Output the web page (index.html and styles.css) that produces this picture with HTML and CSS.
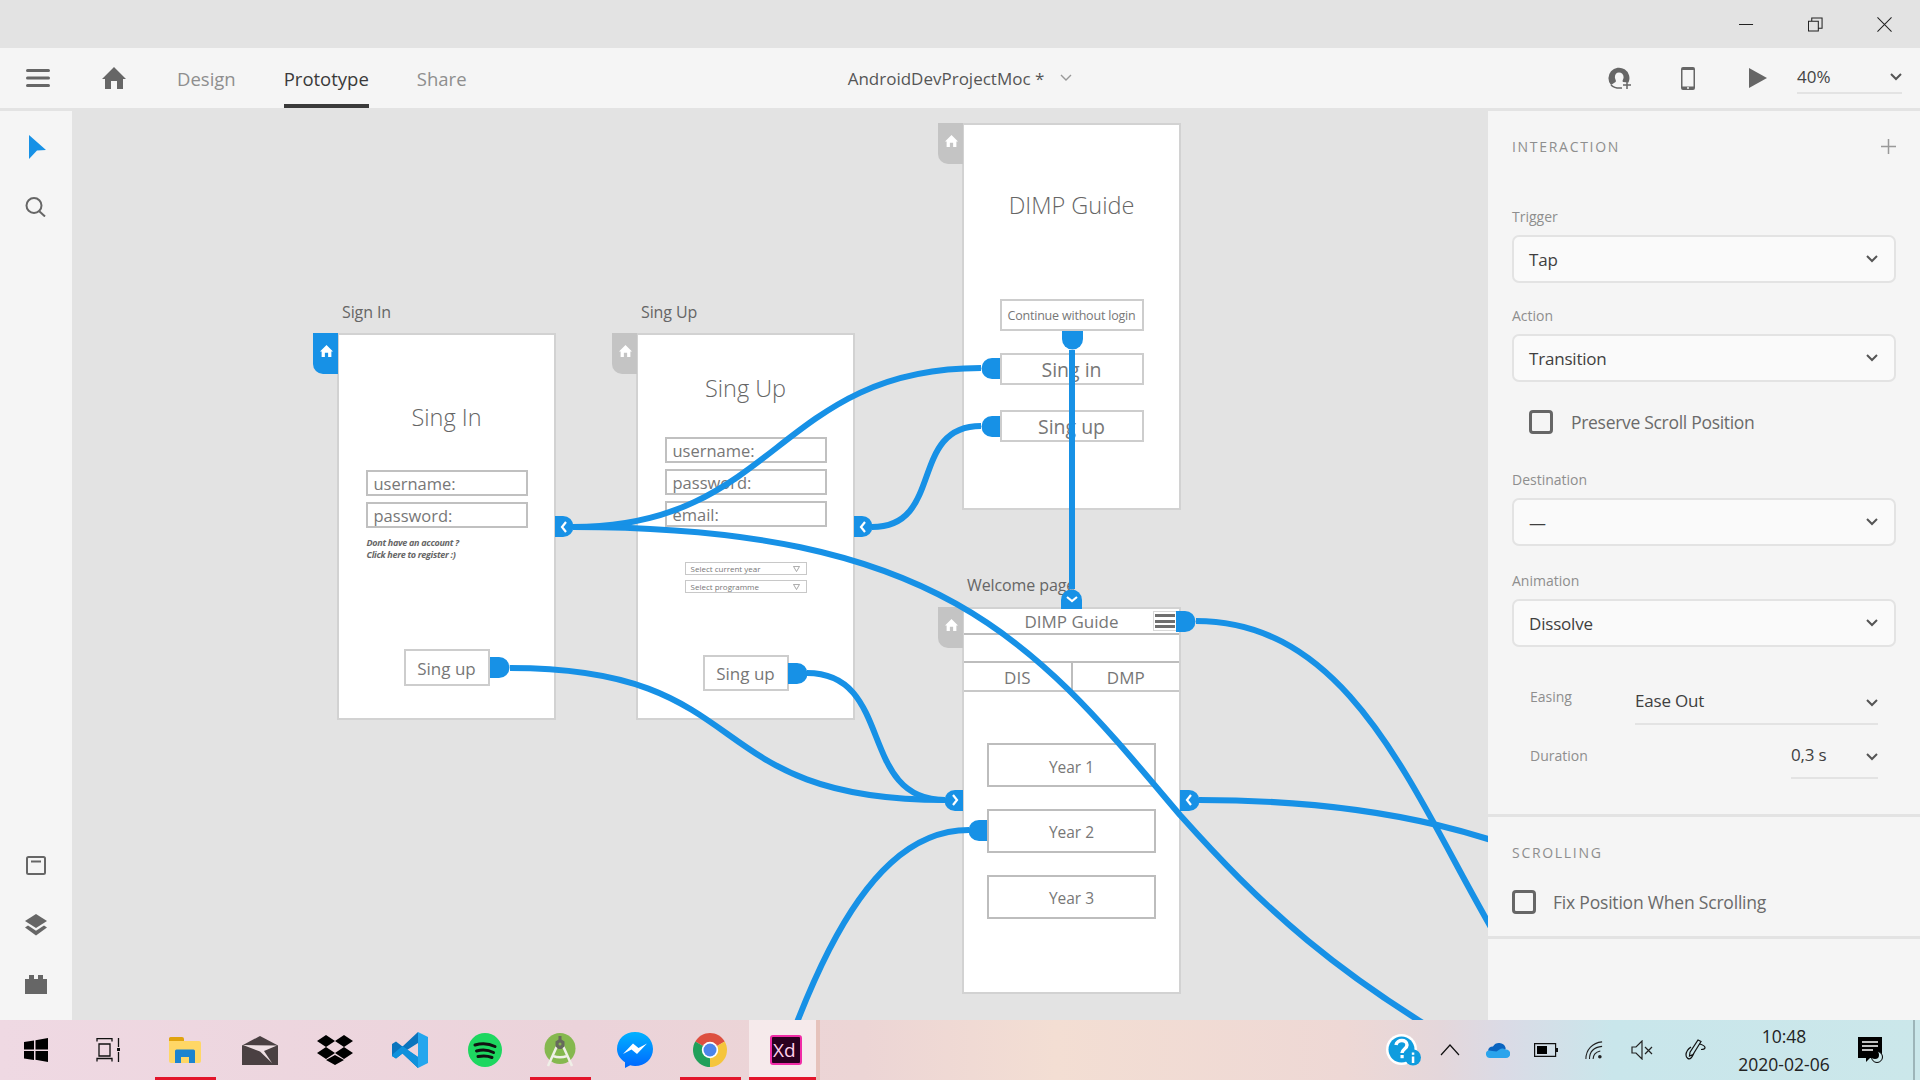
FILE: index.html
```html
<!DOCTYPE html>
<html>
<head>
  <title>AndroidDevProjectMoc - Adobe XD</title>
  <link rel="stylesheet" href="styles.css">
</head>
<body>
  <div class="titlebar">
    <svg class="win-btn" viewBox="0 0 16 16"><path d="M0 8h15"/></svg>
    <svg class="win-btn" viewBox="0 0 16 16"><path d="M.5 4.500h10.500v10.500h-10.500zM4 4.500v-3.500h11v11h-4"/></svg>
    <svg class="win-btn" viewBox="0 0 16 16"><path d="M.5.5l15 15M15.500.5l-15 15"/></svg>
  </div>

  <div class="toolbar">
    <div class="toolbar-left">
      <svg class="menu-icon" viewBox="0 0 24 18"><path d="M1.500 1.500h21M1.500 9h21M1.500 16.500h21"/></svg>
      <svg class="home-icon" viewBox="0 0 24 22"><path d="M12 0l12 12h-3v10h-6v-8h-6v8h-6v-10h-3z"/></svg>
      <a class="tab">Design</a>
      <a class="tab tab-active">Prototype</a>
      <a class="tab">Share</a>
    </div>
    <div class="doc-title">AndroidDevProjectMoc *
      <svg class="chev chev-light" viewBox="0 0 12 8"><path d="M1 1l5 5 5-5"/></svg>
    </div>
    <div class="toolbar-right">
      <svg class="tool-icon user-icon" viewBox="0 0 24 22"><path d="M3 18A10.500 10.500 0 1 1 20.500 15.500L15 15C14 14 15 13 15.500 11C16 8 14 5.500 11 5.500C8 5.500 6.500 8 7 11C7.500 13 8.500 14 7.500 15z"/><path class="thin" d="M3 18C6 21 9 21.500 14 21M19 14v8M15 18h8"/></svg>
      <svg class="tool-icon phone-icon" viewBox="0 0 14 23"><path fill-rule="evenodd" d="M2 0h10a2 2 0 0 1 2 2v19a2 2 0 0 1-2 2h-10a2 2 0 0 1-2-2v-19a2 2 0 0 1 2-2zM1.500 3v16.500h11v-16.500z"/><circle cx="7" cy="21" r="1" fill="#f5f5f5"/></svg>
      <svg class="tool-icon play-icon" viewBox="0 0 18 20"><path d="M0 0l18 10-18 10z"/></svg>
      <div class="zoom-select">40%
        <svg class="chev" viewBox="0 0 12 8"><path d="M1 1l5 5 5-5"/></svg>
      </div>
    </div>
  </div>

  <div class="workspace">
    <div class="rail">
      <div class="rail-group">
        <svg class="rail-icon cursor-icon" viewBox="0 0 17 24"><path d="M0 0l17 15-9 0.500-8 8.500z"/></svg>
        <svg class="rail-icon search-icon" viewBox="0 0 22 20"><circle cx="9" cy="8.500" r="7.500"/><path d="M14 14l6 5.500"/></svg>
      </div>
      <div class="rail-group rail-bottom">
        <svg class="rail-icon outline-icon" viewBox="0 0 20 19"><rect x="1" y="1" width="18" height="17" rx="1.500"/><path d="M5 5.500h10"/></svg>
        <svg class="rail-icon layers-icon" viewBox="0 0 22 22"><path d="M11 0l11 7-11 7-11-7z"/><path d="M3 11.500l8 5.200 8-5.200 3 2-11 8-11-8z"/></svg>
        <svg class="rail-icon plugin-icon" viewBox="0 0 22 19"><path d="M4 0h5v4h4v-4h5v4h4v15h-22v-15h4z"/></svg>
      </div>
    </div>

    <div class="canvas">
      <div class="artboard artboard-signin">
        <span class="artboard-label">Sign In</span>
        <div class="home-tab home-tab-active"><svg viewBox="0 0 24 22"><path d="M12 0l12 12h-3v10h-6v-8h-6v8h-6v-10h-3z"/></svg></div>
        <h2 class="board-title">Sing In</h2>
        <div class="field">username:</div>
        <div class="field">password:</div>
        <p class="hint">Dont have an account ?<br>Click here to register :)</p>
        <div class="btn btn-signup">Sing up</div>
      </div>

      <div class="artboard artboard-signup">
        <span class="artboard-label">Sing Up</span>
        <div class="home-tab"><svg viewBox="0 0 24 22"><path d="M12 0l12 12h-3v10h-6v-8h-6v8h-6v-10h-3z"/></svg></div>
        <h2 class="board-title title-signup">Sing Up</h2>
        <div class="field">username:</div>
        <div class="field">password:</div>
        <div class="field">email:</div>
        <div class="mini-select mini-first">Select current year<svg viewBox="0 0 8 7"><path d="M.5.5h7l-3.500 6z"/></svg></div>
        <div class="mini-select">Select programme<svg viewBox="0 0 8 7"><path d="M.5.5h7l-3.500 6z"/></svg></div>
        <div class="btn btn-signup2">Sing up</div>
      </div>

      <div class="artboard artboard-start">
        <div class="home-tab"><svg viewBox="0 0 24 22"><path d="M12 0l12 12h-3v10h-6v-8h-6v8h-6v-10h-3z"/></svg></div>
        <h2 class="board-title title-start">DIMP Guide</h2>
        <div class="btn btn-wide btn-small">Continue without login</div>
        <div class="btn btn-wide btn-signin">Sing in</div>
        <div class="btn btn-wide btn-last">Sing up</div>
      </div>

      <div class="artboard artboard-welcome">
        <span class="artboard-label">Welcome page</span>
        <div class="home-tab"><svg viewBox="0 0 24 22"><path d="M12 0l12 12h-3v10h-6v-8h-6v8h-6v-10h-3z"/></svg></div>
        <div class="app-header">
          <span></span>
          <span class="app-name">DIMP Guide</span>
          <span class="burger"><i></i><i></i><i></i></span>
        </div>
        <div class="app-tabs"><div>DIS</div><div>DMP</div></div>
        <div class="year">Year 1</div>
        <div class="year">Year 2</div>
        <div class="year">Year 3</div>
      </div>

      <svg class="wires" viewBox="72 108 1416 912">
        <g class="wire">
          <path d="M573 527C777 527 777 368 981 368"/>
          <path d="M573 527C950 527 1040 650 1180 815C1258 902 1335 978 1500 1068"/>
          <path d="M510 668C760 668 695 800 945 800"/>
          <path d="M807 673C895 673 857 800 945 800"/>
          <path d="M872 527C945 527 908 426 981 426"/>
          <path d="M1072 350V589"/>
          <path d="M969 830C733 830 733 1600 495 1600"/>
          <path d="M1196 621C1455 621 1455 1103 1714 1103"/>
          <path d="M1199 800C1600 800 1600 960 2000 960"/>
        </g>
        <g class="node">
          <path d="M490 657h9a10.500 10.500 0 0 1 0 21h-9z"/>
          <path d="M788 663h9a10.500 10.500 0 0 1 0 21h-9z"/>
          <path d="M1000 358h-8a10.500 10.500 0 0 0 0 21h8z"/>
          <path d="M1000 416h-8a10.500 10.500 0 0 0 0 21h8z"/>
          <path d="M1062 331v8a10.500 10.500 0 0 0 21 0v-8z"/>
          <path d="M1176 611h9a10.500 10.500 0 0 1 0 21h-9z"/>
          <path d="M987 820h-8a10.500 10.500 0 0 0 0 21h8z"/>
          <path d="M555 516h8a10.500 10.500 0 0 1 0 21h-8z"/>
          <path d="M854 516h8a10.500 10.500 0 0 1 0 21h-8z"/>
          <path d="M963 790h-8a10.500 10.500 0 0 0 0 21h8z"/>
          <path d="M1180 790h9a10.500 10.500 0 0 1 0 21h-9z"/>
          <path d="M1061 609v-9a10.500 10.500 0 0 1 21 0v9z"/>
        </g>
        <g class="node-arrow">
          <path d="M566 522l-4 5 4 5"/>
          <path d="M865 522l-4 5 4 5"/>
          <path d="M953 795l4 5-4 5"/>
          <path d="M1191 795l-4 5 4 5"/>
          <path d="M1067 597l5 4 5-4"/>
        </g>
      </svg>
    </div>

    <div class="panel">
      <section class="panel-section section-interaction">
        <div class="section-head">
          <span class="section-title">INTERACTION</span>
          <svg class="plus" viewBox="0 0 15 15"><path d="M7.500 0v15M0 7.500h15"/></svg>
        </div>
        <label class="field-label label-first">Trigger</label>
        <div class="select">Tap<svg class="chev" viewBox="0 0 12 8"><path d="M1 1l5 5 5-5"/></svg></div>
        <label class="field-label">Action</label>
        <div class="select">Transition<svg class="chev" viewBox="0 0 12 8"><path d="M1 1l5 5 5-5"/></svg></div>
        <div class="check check-indent"><span class="box"></span>Preserve Scroll Position</div>
        <label class="field-label label-dest">Destination</label>
        <div class="select">—<svg class="chev" viewBox="0 0 12 8"><path d="M1 1l5 5 5-5"/></svg></div>
        <label class="field-label label-anim">Animation</label>
        <div class="select">Dissolve<svg class="chev" viewBox="0 0 12 8"><path d="M1 1l5 5 5-5"/></svg></div>
        <div class="row row-easing">
          <span class="row-label">Easing</span>
          <div class="row-value value-easing">Ease Out<svg class="chev" viewBox="0 0 12 8"><path d="M1 1l5 5 5-5"/></svg></div>
        </div>
        <div class="row row-duration">
          <span class="row-label">Duration</span>
          <div class="row-value value-duration">0,3 s<svg class="chev" viewBox="0 0 12 8"><path d="M1 1l5 5 5-5"/></svg></div>
        </div>
      </section>
      <section class="panel-section section-scrolling">
        <span class="section-title">SCROLLING</span>
        <div class="check check-fix"><span class="box"></span>Fix Position When Scrolling</div>
      </section>
    </div>
  </div>

  <div class="taskbar">
    <div class="task-apps">
      <div class="task-cell cell-sys"><svg width="24" height="24" viewBox="0 0 24 24"><path fill="#000" d="M0 4l10-1.500v9h-10zM11.500 2.300l12.500-2.300v11.500h-12.500zM0 13h10v9l-10-1.500zM11.500 13h12.500v11l-12.500-2.200z"/></svg></div>
      <div class="task-cell cell-sys"><svg width="24" height="24" viewBox="0 0 24 24"><path fill="none" stroke="#111" stroke-width="1.300" d="M1 3.500v-3h15v3M3 6h11v12h-11zM1 23.500v-3h15v3M22.500 0v9M22.500 14v10"/><rect x="21" y="10" width="3" height="3" fill="#111"/></svg></div>
      <div class="task-cell task-running task-gap"><svg width="32" height="26" viewBox="0 0 32 26"><path fill="#e0a30f" d="M0 1.500a1.500 1.500 0 0 1 1.500-1.500h11.500a2 2 0 0 1 2 2v3h-15z"/><path fill="#ffd766" d="M0 4h30a2 2 0 0 1 2 2v18a2 2 0 0 1-2 2h-28a2 2 0 0 1-2-2z"/><path fill="#1c84d0" d="M6 26v-12a1.500 1.500 0 0 1 1.500-1.500h17a1.500 1.500 0 0 1 1.500 1.500v12h-6v-6h-8v6z"/></svg></div>
      <div class="task-cell"><svg width="36" height="29" viewBox="0 0 36 29"><path fill="#4a4042" d="M18 0l18 9.500v19.500h-36v-19.500z"/><path fill="#efe0e4" d="M1 9L35 9.500L22 15L30 27L18 15.500z"/></svg></div>
      <div class="task-cell"><svg width="36" height="30" viewBox="0 0 36 30"><path fill="#000" d="M9 0l9 6-9 6-9-6zM27 0l9 6-9 6-9-6zM0 18l9-6 9 6-9 6zM36 18l-9-6-9 6 9 6zM18 20l9 5-9 5-9-5z"/></svg></div>
      <div class="task-cell"><svg width="36" height="36" viewBox="0 0 36 36"><path fill="#0a74bd" d="M26 0L10.500 14.500 4 9.500 0 12v12l4 2.500 6.500-5L26 36V25L15 18l11-7z"/><path fill="#0f91dc" d="M26 36L10.500 21.500 4 26.500 0 24 1 22 10.500 14 26 25z"/><path fill="#24a6ee" d="M26 0l10 5v26l-10 5z"/></svg></div>
      <div class="task-cell"><svg width="34" height="34" viewBox="0 0 34 34"><circle cx="17" cy="17" r="17" fill="#1ed760"/><path fill="none" stroke="#111" stroke-width="3" stroke-linecap="round" d="M7 12c7-2 14-1.500 20 1.500M8.500 18c6-1.500 12-1 17 1.500M10 23.500c5-1 10-.7 14 1"/></svg></div>
      <div class="task-cell task-running"><svg width="32" height="34" viewBox="0 0 32 34"><circle cx="16" cy="15.500" r="15.500" fill="#85b84f"/><path fill="none" stroke="#f0f0e8" stroke-width="2.500" d="M13 13L4 33M19 13l9 20M9 23c4 1.500 10 1.500 14 0"/><path fill="#666b5c" d="M14.500 3h3v3.500l3 2v5l-3 2.500h-3l-3-2.500v-5l3-2z"/><circle cx="16" cy="11" r="1.500" fill="#85b84f"/></svg></div>
      <div class="task-cell"><svg width="36" height="36" viewBox="0 0 36 36"><defs><linearGradient id="msg" x1="0" y1="0" x2="0" y2="1"><stop offset="0" stop-color="#00b2ff"/><stop offset="1" stop-color="#0066ff"/></linearGradient></defs><path fill="url(#msg)" d="M18 0c10.200 0 18 7.300 18 17s-7.800 17-18 17c-1.700 0-3.300-.2-4.800-.7l-5.200 2.700v-5.800c-4.900-3.100-8-8-8-13.200 0-9.700 7.800-17 18-17z"/><path fill="#fff" d="M6 22l10-10.500 5.500 4.500 8.500-4.500-10 10.500-5.500-4.500z"/></svg></div>
      <div class="task-cell task-running"><svg width="34" height="34" viewBox="0 0 34 34"><path fill="#dd4f3f" d="M17 17L2.300 8.500A17 17 0 0 1 31.700 8.500z"/><path fill="#f5c53c" d="M17 17L31.700 8.500A17 17 0 0 1 17 34z"/><path fill="#21a05a" d="M17 17L17 34A17 17 0 0 1 2.300 8.500z"/><circle cx="17" cy="17" r="8.200" fill="#fff"/><circle cx="17" cy="17" r="6.500" fill="#4c85ea"/></svg></div>
      <div class="task-cell task-active"><svg width="32" height="30" viewBox="0 0 32 30"><rect x="1" y="1" width="30" height="28" rx="2" fill="#2b0020" stroke="#f02ca6" stroke-width="2"/></svg><span class="xd-text">Xd</span></div>
    </div>

    <div class="tray">
      <div class="tray-cell tray-help"><svg width="36" height="32" viewBox="0 0 36 32"><circle cx="15.500" cy="15.500" r="15.500" fill="#fff"/><circle cx="15.500" cy="15.500" r="13" fill="#0f9cde"/><circle cx="27" cy="23.500" r="8" fill="#0f9cde"/><path fill="none" stroke="#fff" stroke-width="3.500" d="M10 11c1-6 11-6 11 0 0 4-5 4-5 8"/><rect x="14.500" y="21" width="3.200" height="3.200" fill="#fff"/><rect x="25.800" y="22.500" width="2.500" height="6.500" fill="#fff"/><rect x="25.800" y="18.500" width="2.500" height="2.300" fill="#fff"/></svg></div>
      <div class="tray-cell"><svg width="20" height="12" viewBox="0 0 20 12"><path fill="none" stroke="#111" stroke-width="1.200" d="M1 11l9-10 9 10"/></svg></div>
      <div class="tray-cell"><svg width="24" height="16" viewBox="0 0 24 16"><path fill="#2aa4ec" d="M4 16a4 4 0 0 1-2-7.500l7-.5 5-3c2 0 4 1 5 2.500h1a4.200 4.200 0 0 1 0 8.500z"/><path fill="#0a64c0" d="M2 8.500a5 5 0 0 1 5-4 7 7 0 0 1 12.500 1c.2 1 .2 1.500 0 2-3-1.500-4-1.500-6 0l-3 2z"/></svg></div>
      <div class="tray-cell"><svg width="24" height="14" viewBox="0 0 24 14"><path fill="none" stroke="#111" stroke-width="1.200" d="M.6.600h21v12.800h-21z"/><rect x="3" y="3" width="10" height="8" fill="#000"/><rect x="22" y="5" width="2" height="4" fill="#111"/></svg></div>
      <div class="tray-cell"><svg width="18" height="18" viewBox="0 0 20 20"><path fill="none" stroke="#222" stroke-width="1.200" d="M1 20c0-10 7-18 18-19M5 20c0-8 5-13 14-14M9 20c0-5 4-8 8-9"/><circle cx="16.500" cy="17.500" r="2" fill="#222"/></svg></div>
      <div class="tray-cell"><svg width="22" height="20" viewBox="0 0 22 20"><path fill="none" stroke="#222" stroke-width="1.200" d="M1 7h4l6-6v18l-6-6h-4zM14 7l7 7M21 7l-7 7"/></svg></div>
      <div class="tray-cell tray-pen"><svg width="22" height="22" viewBox="0 0 22 22"><path fill="none" stroke="#111" stroke-width="1.200" d="M13 1l3 1.500-8 13-3.500 1.500.500-3.800zM15 5c3 1 5 2 5 3.500s-2 2-4 2M6 8c-3 2-5 5-5 8s3 5 5 3c1.500-1.500 2-3 3-5"/></svg></div>
      <div class="clock"><span>10:48</span><span>2020-02-06</span></div>
      <div class="tray-cell tray-notif"><svg width="25" height="26" viewBox="0 0 25 26"><path fill="#000" d="M0 0h24v21h-12l-4 4v-4h-8z"/><path stroke="#fff" stroke-width="1.400" d="M4 5h16M4 9h16M4 13h11"/><circle cx="19" cy="20" r="5.500" fill="#cbe7ea" stroke="#000"/><circle cx="17" cy="18" r="4" fill="#000"/></svg></div>
      <span class="show-desktop"></span>
    </div>
  </div>
</body>
</html>
```

FILE: styles.css
```css
* {
  box-sizing: border-box;
}
html, body {
  margin: 0;
  height: 1080px;
  overflow: hidden;
}
body {
  width: 1920px;
  background: #e3e3e3;
  font-family: "Open Sans", "Noto Sans", sans-serif;
  color: #6f6f6f;
}
svg {
  display: block;
}

/* title bar */
.titlebar {
  height: 48px;
  display: flex;
  justify-content: flex-end;
  align-items: center;
  padding-right: 28px;
  gap: 54px;
}
.win-btn {
  width: 15px;
  height: 15px;
  fill: none;
  stroke: #222;
  stroke-width: 1.1;
}

/* top toolbar */
.toolbar {
  height: 60px;
  background: #f5f5f5;
  display: grid;
  grid-template-columns: 1fr auto 1fr;
  align-items: center;
}
.toolbar-left {
  display: flex;
  align-items: center;
  height: 100%;
  padding-left: 26px;
}
.menu-icon {
  width: 24px;
  height: 18px;
  fill: none;
  stroke: #666;
  stroke-width: 3;
  stroke-linecap: round;
}
.home-icon {
  width: 24px;
  height: 22px;
  fill: #666;
  margin-left: 52px;
}
.tab {
  height: 100%;
  display: flex;
  align-items: center;
  font-size: 18.500px;
  color: #8e8e8e;
  margin-left: 48px;
  border-bottom: 4px solid transparent;
  padding-top: 4px;
}
.tab:first-of-type {
  margin-left: 51px;
}
.tab-active {
  color: #3a3a3a;
  border-bottom-color: #3a3a3a;
}
.doc-title {
  display: flex;
  align-items: center;
  gap: 16px;
  font-size: 17px;
  color: #555;
}
.toolbar-right {
  display: flex;
  align-items: center;
  justify-content: flex-end;
  padding-right: 18px;
}
.tool-icon {
  fill: #666;
}
.user-icon {
  width: 24px;
  height: 22px;
}
.user-icon .thin {
  fill: none;
  stroke: #666;
  stroke-width: 1.500;
}
.phone-icon {
  width: 14px;
  height: 23px;
  margin-left: 49px;
}
.play-icon {
  width: 18px;
  height: 20px;
  margin-left: 54px;
}
.zoom-select {
  width: 105px;
  height: 38px;
  margin: 0 0 0 30px;
  padding-top: 5px;
  display: flex;
  justify-content: space-between;
  align-items: center;
  border-bottom: 2px solid #e3e3e3;
  font-size: 17px;
  color: #444;
  position: relative;
  top: -3px;
}
.chev {
  width: 12px;
  height: 8px;
  fill: none;
  stroke: #555;
  stroke-width: 2;
}
.chev-light {
  stroke: #999;
  stroke-width: 1.400;
}

/* body of the window */
.workspace {
  height: 912px;
  display: flex;
}
.rail {
  width: 72px;
  margin-top: 3px;
  background: #f5f5f5;
  display: flex;
  flex-direction: column;
  justify-content: space-between;
  align-items: center;
}
.rail-group {
  display: flex;
  flex-direction: column;
  align-items: center;
  padding-top: 24px;
  gap: 38px;
}
.rail-bottom {
  padding: 0 0 26px;
  gap: 39px;
}
.rail-icon {
  width: 22px;
}
.cursor-icon {
  width: 17px;
  height: 24px;
  margin-left: 2px;
  fill: #1791e6;
}
.search-icon {
  height: 20px;
  fill: none;
  stroke: #666;
  stroke-width: 2;
}
.outline-icon {
  width: 20px;
  height: 19px;
  fill: none;
  stroke: #666;
  stroke-width: 2;
}
.layers-icon {
  height: 22px;
  fill: #666;
}
.plugin-icon {
  height: 19px;
  fill: #666;
}

/* artboards */
.canvas {
  position: relative;
  width: 1416px;
  height: 912px;
  overflow: hidden;
}
.wires {
  position: absolute;
  left: 0;
  top: 0;
  width: 1416px;
  height: 912px;
}
.wire path {
  fill: none;
  stroke: #1791e6;
  stroke-width: 6;
}
.node path {
  fill: #1791e6;
}
.node-arrow path {
  fill: none;
  stroke: #fff;
  stroke-width: 2.200;
}
.artboard {
  position: absolute;
  width: 219px;
  height: 387px;
  background: #fff;
  border: 2px solid #d2d2d2;
  display: flex;
  flex-direction: column;
  align-items: center;
}
.artboard-signin {
  left: 265px;
  top: 225px;
  padding-top: 67px;
}
.artboard-signup {
  left: 564px;
  top: 225px;
  padding-top: 38px;
}
.artboard-start {
  left: 890px;
  top: 15px;
  padding-top: 65px;
}
.artboard-welcome {
  left: 890px;
  top: 499px;
}
.artboard-label {
  position: absolute;
  left: 3px;
  top: -34px;
  font-size: 16px;
  color: #666;
  letter-spacing: -0.1px;
  white-space: nowrap;
}
.artboard-welcome .artboard-label {
  top: -35px;
}
.home-tab {
  position: absolute;
  left: -26px;
  top: -2px;
  width: 25px;
  height: 41px;
  background: #c4c4c4;
  border-radius: 0 0 0 10px;
  padding: 12px 0 0 7px;
}
.home-tab svg {
  width: 13px;
  height: 12px;
  fill: #fff;
}
.home-tab-active {
  background: #1791e6;
}
.board-title {
  margin: 0 0 38px;
  height: 30px;
  line-height: 30px;
  font-size: 23.500px;
  font-weight: 300;
  color: #666;
}
.title-signup {
  margin-bottom: 34px;
}
.title-start {
  margin-bottom: 79px;
}
.field {
  width: 162px;
  height: 26px;
  line-height: 24px;
  margin-bottom: 6px;
  padding-left: 6px;
  border: 2px solid #c0c0c0;
  font-size: 16.500px;
  color: #777;
  overflow: hidden;
}
.hint {
  width: 162px;
  height: 26px;
  margin: 3px 0 -1px;
  padding-left: 1px;
  font-size: 9px;
  line-height: 12px;
  font-style: italic;
  font-weight: 700;
  color: #666;
  letter-spacing: -0.3px;
}
.btn {
  display: flex;
  align-items: center;
  justify-content: center;
  border: 2px solid #cdcdcd;
  font-size: 17px;
  color: #777;
  background: #fff;
}
.btn-signup {
  width: 86px;
  height: 37px;
  margin-top: 87px;
  padding-top: 1px;
}
.btn-signup2 {
  width: 86px;
  height: 36px;
  margin-top: 57px;
}
.btn-wide {
  width: 144px;
  height: 32px;
  font-size: 19.500px;
}
.btn-small {
  font-size: 12.500px;
  letter-spacing: -0.2px;
}
.btn-signin {
  margin-top: 22px;
}
.btn-last {
  margin-top: 25px;
}
.mini-select {
  width: 122px;
  height: 13px;
  margin-bottom: 5px;
  padding: 0 6px 0 5px;
  display: flex;
  justify-content: space-between;
  align-items: center;
  border: 1px solid #c8c8c8;
  font-size: 8px;
  color: #777;
}
.mini-first {
  margin-top: 29px;
}
.mini-select svg {
  width: 7px;
  height: 6px;
  fill: none;
  stroke: #999;
}
.app-header {
  width: 100%;
  height: 26px;
  display: grid;
  grid-template-columns: 1fr auto 1fr;
  align-items: center;
  border-bottom: 2px solid #bdbdbd;
  font-size: 17px;
  color: #777;
}
.burger {
  justify-self: end;
  width: 24px;
  height: 20px;
  margin-right: 2px;
  padding: 2px 1px;
  display: flex;
  flex-direction: column;
  justify-content: space-between;
  border: 1px solid #d8d8d8;
}
.burger i {
  height: 3px;
  background: #6f6f6f;
}
.app-tabs {
  width: 100%;
  margin-top: 26px;
  height: 31px;
  display: flex;
  border-top: 2px solid #bdbdbd;
  border-bottom: 2px solid #c8c8c8;
  font-size: 17px;
  color: #777;
}
.app-tabs div {
  flex: 1;
  display: flex;
  align-items: center;
  justify-content: center;
  padding-top: 1px;
}
.app-tabs div:first-child {
  border-right: 2px solid #bdbdbd;
}
.year {
  width: 169px;
  height: 44px;
  margin-top: 22px;
  padding-top: 2px;
  display: flex;
  align-items: center;
  justify-content: center;
  border: 2px solid #bdbdbd;
  font-size: 15.500px;
  color: #777;
}
.app-tabs + .year {
  margin-top: 51px;
  padding-top: 3px;
}

/* properties panel */
.panel {
  width: 432px;
  margin-top: 3px;
  background: #f5f5f5;
  display: flex;
  flex-direction: column;
  color: #555;
}
.panel-section {
  padding: 0 24px;
}
.section-interaction {
  height: 706px;
  padding-top: 24px;
  border-bottom: 3px solid #e3e3e3;
}
.section-scrolling {
  height: 122px;
  padding-top: 24px;
  border-bottom: 3px solid #e3e3e3;
}
.section-head {
  display: flex;
  justify-content: space-between;
  align-items: center;
  height: 22px;
}
.section-title {
  font-size: 14px;
  letter-spacing: 1.700px;
  color: #8e8e8e;
}
.plus {
  width: 15px;
  height: 15px;
  fill: none;
  stroke: #999;
  stroke-width: 1.500;
}
.field-label {
  display: block;
  height: 20px;
  line-height: 20px;
  margin: 23px 0 8px;
  font-size: 14px;
  color: #8e8e8e;
}
.label-first {
  margin-top: 50px;
}
.label-dest {
  margin-top: 36px;
}
.label-anim {
  margin-top: 25px;
}
.select {
  height: 48px;
  padding: 0 16px 0 15px;
  display: flex;
  justify-content: space-between;
  align-items: center;
  background: #fafafa;
  border: 2px solid #e3e3e3;
  border-radius: 7px;
  font-size: 17px;
  color: #3f3f3f;
  letter-spacing: -0.2px;
}
.check {
  display: flex;
  align-items: center;
  font-size: 17.500px;
  color: #6a6a6a;
  letter-spacing: -0.2px;
}
.check-indent {
  margin: 28px 0 0 17px;
  height: 24px;
  letter-spacing: -0.3px;
}
.check-fix {
  margin-top: 27px;
  height: 24px;
}
.box {
  width: 24px;
  height: 24px;
  margin-right: 18px;
  border: 3px solid #666;
  border-radius: 4px;
}
.check-fix .box {
  margin-right: 17px;
}
.row {
  display: flex;
  justify-content: space-between;
  align-items: flex-start;
  padding: 0 18px;
  height: 40px;
}
.row-easing {
  margin-top: 38px;
}
.row-duration {
  margin-top: 14px;
}
.row-label {
  height: 20px;
  line-height: 20px;
  margin-top: 2px;
  font-size: 14px;
  color: #8e8e8e;
}
.row-duration .row-label {
  margin-top: 7px;
}
.row-value {
  height: 40px;
  padding-bottom: 7px;
  display: flex;
  justify-content: space-between;
  align-items: center;
  border-bottom: 2px solid #e3e3e3;
  font-size: 17px;
  color: #3f3f3f;
  letter-spacing: -0.2px;
}
.row-value .chev {
  margin-top: 5px;
}
.value-easing {
  width: 243px;
}
.value-duration {
  width: 87px;
}

/* windows taskbar */
.taskbar {
  height: 60px;
  display: flex;
  justify-content: space-between;
  background: linear-gradient(90deg, #efd9e3 0%, #ebd3da 30%, #ecd5d5 45%, #f3ded3 55%, #eed8d5 70%, #e4d7db 75%, #dadbe6 78.500%, #c9e6eb 84%, #cbe7ea 100%);
}
.task-apps {
  display: flex;
}
.task-cell {
  position: relative;
  width: 75px;
  display: flex;
  align-items: center;
  justify-content: center;
}
.cell-sys {
  width: 72px;
}
.task-gap {
  margin-left: 3px;
}
.task-running::after, .task-active::after {
  content: "";
  position: absolute;
  bottom: 0;
  left: 8px;
  width: 61px;
  height: 3px;
  background: #e3152b;
}
.task-active {
  background: rgba(255, 255, 255, 0.5);
  border-right: 4px solid #e6c3bc;
  width: 71px;
  margin-left: 2px;
  padding-left: 6px;
}
.task-active::after {
  left: 0;
  width: 67px;
}
.xd-text {
  position: absolute;
  left: 24px;
  font-size: 19px;
  line-height: 24px;
  color: #ffd0ea;
}
.tray {
  display: flex;
  align-items: center;
  height: 100%;
}
.tray-cell {
  width: 48px;
  display: flex;
  align-items: center;
  justify-content: center;
}
.tray-help {
  padding-left: 3px;
}
.tray-pen {
  margin-left: 6px;
}
.clock {
  width: 128px;
  display: flex;
  flex-direction: column;
  align-items: center;
  gap: 8px;
  font-size: 17.500px;
  line-height: 20px;
  color: #222;
}
.tray-notif {
  width: 44px;
}
.show-desktop {
  width: 28px;
  height: 100%;
  background: linear-gradient(90deg, transparent 21px, #9db4b8 21px, #9db4b8 23px, transparent 23px);
}
```
